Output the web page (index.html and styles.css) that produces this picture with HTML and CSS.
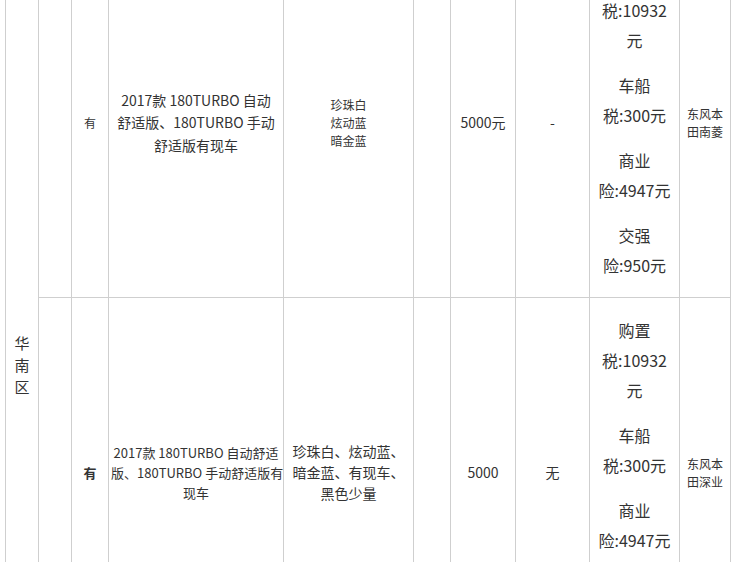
FILE: index.html
```html
<!DOCTYPE html>
<html lang="zh-CN">
<head>
<meta charset="utf-8">
<title>车型报价</title>
<link rel="stylesheet" href="styles.css">
</head>
<body>
<div class="page">
<table class="price-table">
  <colgroup>
    <col class="c-region">
    <col class="c-blank">
    <col class="c-stock">
    <col class="c-model">
    <col class="c-color">
    <col class="c-blank2">
    <col class="c-deposit">
    <col class="c-gift">
    <col class="c-tax">
    <col class="c-dealer">
  </colgroup>
  <tbody>
    <tr>
      <td rowspan="3" class="region">华南区</td>
      <td></td>
      <td class="stock">有</td>
      <td class="model">2017款 180TURBO 自动<br>舒适版、180TURBO 手动<br>舒适版有现车</td>
      <td class="color small">珍珠白<br>炫动蓝<br>暗金蓝</td>
      <td></td>
      <td class="num">5000元</td>
      <td class="num">-</td>
      <td class="tax">
        <p>购置<br>税:10932<br>元</p>
        <p>车船<br>税:300元</p>
        <p>商业<br>险:4947元</p>
        <p>交强<br>险:950元</p>
      </td>
      <td class="dealer">东风本田南菱</td>
    </tr>
    <tr>
      <td></td>
      <td class="stock bold">有</td>
      <td class="model model-sm">2017款 180TURBO 自动舒适<br>版、180TURBO 手动舒适版有<br>现车</td>
      <td class="color">珍珠白、炫动蓝、<br>暗金蓝、有现车、<br>黑色少量</td>
      <td></td>
      <td class="num">5000</td>
      <td class="num">无</td>
      <td class="tax">
        <p>购置<br>税:10932<br>元</p>
        <p>车船<br>税:300元</p>
        <p>商业<br>险:4947元</p>
        <p>交强<br>险:950元</p>
      </td>
      <td class="dealer">东风本田深业</td>
    </tr>
    <tr class="filler">
      <td></td><td></td><td></td><td></td><td></td><td></td><td></td><td></td><td></td>
    </tr>
  </tbody>
</table>
</div>
</body>
</html>
```

FILE: styles.css
```css
html, body {
  margin: 0;
  padding: 0;
  background: #fff;
  overflow: hidden;
}

.page {
  padding-left: 5px;
  height: 562px;
  overflow: hidden;
}

.price-table {
  margin-top: -53px;
  border-collapse: collapse;
  table-layout: fixed;
  width: 726px;
  font-family: "Microsoft YaHei", "Noto Sans CJK SC", "Noto Sans", sans-serif;
  color: #333;
}

.c-region { width: 33px; }
.c-blank { width: 33px; }
.c-stock { width: 37px; }
.c-model { width: 175px; }
.c-color { width: 130px; }
.c-blank2 { width: 37px; }
.c-deposit { width: 65px; }
.c-gift { width: 74px; }
.c-tax { width: 90px; }
.c-dealer { width: 51px; }

.price-table td {
  border: 1px solid #cfcfcf;
  padding: 2px 4px;
  text-align: center;
  vertical-align: middle;
  font-size: 14px;
  line-height: 21px;
}

.price-table td.region {
  padding: 0 8px;
  font-size: 15px;
  line-height: 22px;
}

.price-table td.stock {
  font-size: 12px;
  padding: 0;
}

.price-table td.bold {
  font-weight: bold;
  font-size: 13px;
}

.price-table td.model {
  font-size: 14px;
  line-height: 22.5px;
  padding: 0 2px;
  white-space: nowrap;
}

.price-table td.model-sm {
  font-size: 13px;
  line-height: 20px;
}

.price-table td.color {
  white-space: nowrap;
  padding: 0 2px;
}

.price-table td.small {
  font-size: 12px;
  line-height: 18px;
}

.price-table td.num {
  font-size: 14px;
}

.price-table td.tax {
  font-size: 16px;
  line-height: 30px;
  padding: 2px 0;
  white-space: nowrap;
}

.tax p {
  margin: 15px 0;
}

.price-table td.dealer {
  font-size: 12px;
  line-height: 18px;
  padding: 0 6px;
}

.filler td {
  height: 130px;
}
```
